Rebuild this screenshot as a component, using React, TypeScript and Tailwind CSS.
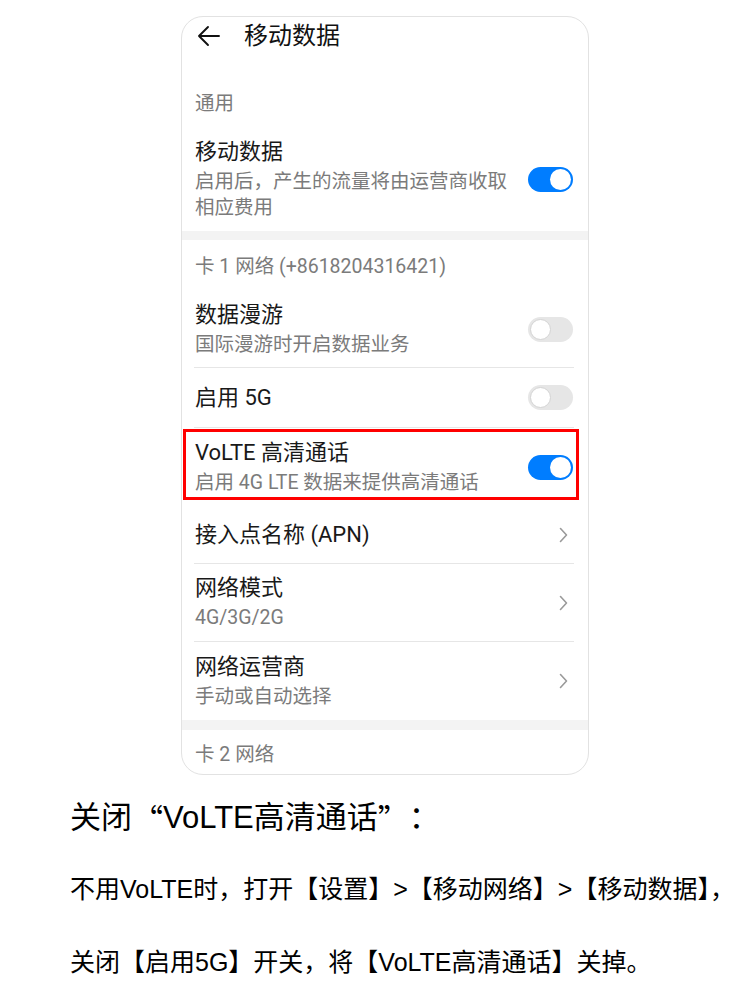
import React from 'react';

const phoneFont = "[font-family:Roboto,'Noto_Sans_CJK_SC',sans-serif]";
const pageFont = "[font-family:'Liberation_Sans','Noto_Sans_CJK_SC',sans-serif]";
const cjkFont = "[font-family:'Noto_Sans_CJK_SC',sans-serif]";

const Toggle = ({ on }: { on: boolean }) => (
  <div
    className={`w-[45px] h-[25px] shrink-0 rounded-full p-[2px] flex ${
      on ? 'bg-[#007dff] justify-end' : 'bg-[#e6e6e6] justify-start'
    }`}
  >
    <div className={`w-[21px] h-[21px] rounded-full bg-white ${on ? '' : 'border border-[#d4d4d4]'}`} />
  </div>
);

const Chevron = () => (
  <svg width="9" height="16" viewBox="0 0 9 16" className="shrink-0 mr-[5px]">
    <polyline points="1.5,1.5 7.5,8 1.5,14.5" fill="none" stroke="#9a9a9a" strokeWidth="1.6" strokeLinecap="round" strokeLinejoin="round" />
  </svg>
);

type RowProps = {
  title: string;
  sub?: string[];
  right: React.ReactNode;
  h: string;
  divider?: boolean;
};

const Row = ({ title, sub, right, h, divider }: RowProps) => (
  <div className={`ml-[12px] mr-[14px] pl-[1px] pr-[1px] flex items-center justify-between ${h} ${divider ? 'border-b border-[#e6e6e6]' : ''}`}>
    <div className="flex flex-col gap-[3px]">
      <div className="text-[22px] leading-[28px] text-[#191919]">{title}</div>
      {sub && (
        <div className="text-[19.5px] leading-[26px] text-[#7b7b7b]">
          {sub.map((s) => (
            <div key={s}>{s}</div>
          ))}
        </div>
      )}
    </div>
    {right}
  </div>
);

const SectionHead = ({ label, cls }: { label: string; cls: string }) => (
  <div className={`pl-[13px] text-[19.5px] leading-[24px] text-[#7b7b7b] ${cls}`}>{label}</div>
);

const App: React.FC = () => {
  return (
    <div className="w-[750px] h-[1002px] bg-white overflow-hidden">
      <div className="pt-[16px]">
        <div className={`ml-[181px] w-[408px] h-[759px] rounded-[22px] border border-[#e2e2e2] overflow-hidden bg-white ${phoneFont}`}>
          {/* header */}
          <div className="h-[38px] flex items-center">
            <svg width="24" height="22" viewBox="0 0 24 22" className="ml-[15px]">
              <path d="M2 11H22M11 2L2 11L11 20" fill="none" stroke="#111" strokeWidth="1.9" strokeLinecap="round" strokeLinejoin="round" />
            </svg>
            <div className="ml-[23px] text-[24px] leading-[30px] text-[#111]">移动数据</div>
          </div>

          <SectionHead label="通用" cls="mt-[37px] h-[36px]" />

          <Row
            title="移动数据"
            sub={['启用后，产生的流量将由运营商收取', '相应费用']}
            right={<Toggle on />}
            h="h-[103px]"
          />

          <div className="h-[9px] bg-[#f3f3f3]" />

          <SectionHead label="卡 1 网络 (+8618204316421)" cls="pt-[15px] h-[52px]" />

          <Row title="数据漫游" sub={['国际漫游时开启数据业务']} right={<Toggle on={false} />} h="h-[76px]" divider />
          <Row title="启用 5G" right={<Toggle on={false} />} h="h-[60px]" divider />

          <div className="relative">
            <Row title="VoLTE 高清通话" sub={['启用 4G LTE 数据来提供高清通话']} right={<Toggle on />} h="h-[78px]" />
            <div className="absolute left-[1px] top-[1px] w-[396px] h-[71px] border-[3px] border-[#ff0000]" />
          </div>

          <Row title="接入点名称 (APN)" right={<Chevron />} h="h-[58px]" divider />
          <Row title="网络模式" sub={['4G/3G/2G']} right={<Chevron />} h="h-[78px]" divider />
          <Row title="网络运营商" sub={['手动或自动选择']} right={<Chevron />} h="h-[78px]" />

          <div className="h-[10px] bg-[#f3f3f3]" />

          <SectionHead label="卡 2 网络" cls="pt-[13px]" />
        </div>
      </div>

      <div className={`ml-[70px] text-black whitespace-nowrap ${pageFont}`}>
        <div className="h-[72px] mt-[7px] flex items-center text-[31px]">
          关闭<span className={cjkFont}>“</span>VoLTE高清通话<span className={cjkFont}>”</span>：
        </div>
        <div className="h-[72px] flex items-center text-[25px]">不用VoLTE时，打开【设置】&gt;【移动网络】&gt;【移动数据】，</div>
        <div className="h-[73px] flex items-center text-[25px]">关闭【启用5G】开关，将【VoLTE高清通话】关掉。</div>
      </div>
    </div>
  );
};

export default App;
